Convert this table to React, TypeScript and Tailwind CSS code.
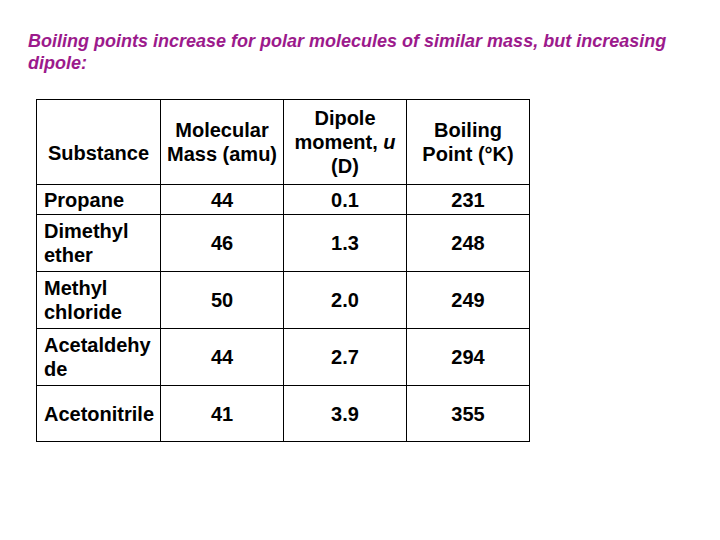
const rows = [
  { name: "Propane", mass: "44", dipole: "0.1", bp: "231", h: "h-[30px]" },
  { name: "Dimethyl ether", mass: "46", dipole: "1.3", bp: "248", h: "h-[57px]" },
  { name: "Methyl chloride", mass: "50", dipole: "2.0", bp: "249", h: "h-[57px]" },
  { name: "Acetaldehy de", mass: "44", dipole: "2.7", bp: "294", h: "h-[57px]" },
  { name: "Acetonitrile", mass: "41", dipole: "3.9", bp: "355", h: "h-[56px]" },
];

const App = () => (
  <div className="w-[720px] h-[540px] bg-white font-['Liberation_Sans',Arial,sans-serif] text-black">
    <p className="pt-[30px] pl-[28px] pr-[30px] text-[18px] leading-[22px] font-bold italic text-[#9c1a8c]">
      Boiling points increase for polar molecules of similar mass, but increasing dipole:
    </p>
    <div className="pl-[36px] pt-[25px]">
      <table className="border-collapse text-[20px] leading-[24px] font-bold">
        <thead>
          <tr className="h-[85px]">
            <th className="w-[124px] border border-black px-[4px] pt-[22px] font-bold">Substance</th>
            <th className="w-[123px] border border-black px-[2px] font-bold">
              Molecular
              <br />
              Mass (amu)
            </th>
            <th className="w-[123px] border border-black px-[2px] font-bold">
              Dipole
              <br />
              moment, <i>u</i>
              <br />
              (D)
            </th>
            <th className="w-[123px] border border-black px-[2px] font-bold">
              Boiling
              <br />
              Point (°K)
            </th>
          </tr>
        </thead>
        <tbody>
          {rows.map((r) => (
            <tr key={r.name} className={r.h}>
              <td className="border border-black pl-[7px] pr-[2px] text-left">{r.name}</td>
              <td className="border border-black text-center">{r.mass}</td>
              <td className="border border-black text-center">{r.dipole}</td>
              <td className="border border-black text-center">{r.bp}</td>
            </tr>
          ))}
        </tbody>
      </table>
    </div>
  </div>
);

export default App;
